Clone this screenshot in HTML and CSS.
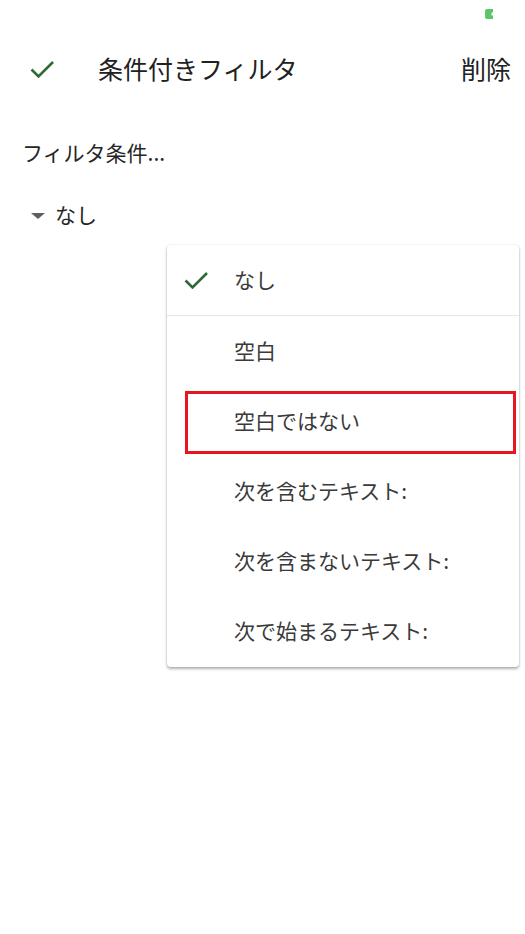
FILE: index.html
```html
<!DOCTYPE html>
<html lang="ja">
<head>
<meta charset="utf-8">
<link rel="stylesheet" href="styles.css">
</head>
<body>
<div class="screen">
  <div class="status">
    <svg class="status-icon" width="9" height="10" viewBox="0 0 9 10"><path d="M2 0H8V3.5H6.5V6.5H8V10H2A2 2 0 0 1 0 8V2A2 2 0 0 1 2 0Z" fill="#5cc46a"/></svg>
  </div>
  <div class="header">
    <svg class="check" width="24" height="24" viewBox="0 0 24 24"><path d="M1.5 12.5L8.5 19.5L23 5" fill="none" stroke="#2e6b34" stroke-width="2.6"/></svg>
    <div class="title">条件付きフィルタ</div>
    <div class="action">削除</div>
  </div>
  <div class="label">フィルタ条件...</div>
  <div class="select">
    <span class="tri"></span>
    <span class="select-text">なし</span>
  </div>

  <div class="menu">
    <div class="item first">
      <svg class="check menu-check" width="24" height="24" viewBox="0 0 24 24"><path d="M1.5 12.5L8.5 19.5L23 5" fill="none" stroke="#2e6b34" stroke-width="2.6"/></svg>
      <span class="item-text">なし</span>
    </div>
    <div class="item"><span class="item-text">空白</span></div>
    <div class="item highlighted"><span class="item-text">空白ではない</span></div>
    <div class="item"><span class="item-text">次を含むテキスト:</span></div>
    <div class="item"><span class="item-text">次を含まないテキスト:</span></div>
    <div class="item last"><span class="item-text">次で始まるテキスト:</span></div>
  </div>
</div>
</body>
</html>
```
FILE: styles.css
```css
html, body {
  margin: 0;
  padding: 0;
  background: #ffffff;
}
body {
  font-family: "Noto Sans CJK JP", "Noto Sans", sans-serif;
  color: #222222;
}
.screen {
  position: relative;
  width: 525px;
  height: 934px;
  overflow: hidden;
}
.status {
  height: 28px;
  box-sizing: border-box;
  padding: 9px 31px 0 0;
  display: flex;
  justify-content: flex-end;
  align-items: flex-start;
}
.status-icon {
  display: block;
}
.header {
  height: 82px;
  display: flex;
  align-items: center;
  padding: 0 14px 0 30px;
}
.check {
  display: block;
  flex: none;
}
.title {
  margin-left: 44px;
  font-size: 25px;
  line-height: 32px;
  padding-bottom: 3px;
  flex: 1;
  color: #212121;
}
.action {
  font-size: 25px;
  line-height: 32px;
  padding-bottom: 3px;
  color: #212121;
}
.label {
  margin-top: 28px;
  padding-left: 22px;
  font-size: 21px;
  line-height: 28px;
  color: #262626;
}
.select {
  margin-top: 34px;
  padding-left: 31px;
  height: 28px;
  display: flex;
  align-items: center;
}
.tri {
  width: 0;
  height: 0;
  border-left: 7px solid transparent;
  border-right: 7px solid transparent;
  border-top: 6px solid #5f5f5f;
  margin-top: 3px;
}
.select-text {
  margin-left: 10px;
  font-size: 21px;
  line-height: 28px;
  color: #262626;
}
.menu {
  position: absolute;
  top: 245px;
  left: 167px;
  width: 352px;
  background: #ffffff;
  border-radius: 4px;
  box-shadow: 0 0 2px rgba(0, 0, 0, 0.12), 0 2px 3px rgba(0, 0, 0, 0.3);
  display: flex;
  flex-direction: column;
}
.item {
  position: relative;
  height: 70px;
  display: flex;
  align-items: center;
  padding-left: 67px;
  font-size: 21px;
  color: #3a3a3a;
}
.item.first {
  height: 71px;
  padding-left: 17px;
  border-bottom: 1px solid #e6e6e6;
  box-sizing: border-box;
}
.item.last {
  height: 71px;
  padding-bottom: 1px;
  box-sizing: border-box;
}
.menu-check {
  margin-right: 26px;
}
.item-text {
  line-height: 28px;
  padding-bottom: 2px;
}
.highlighted::after {
  content: "";
  position: absolute;
  left: 18px;
  top: 5px;
  width: 325px;
  height: 57px;
  border: 3px solid #e5161f;
}
```
